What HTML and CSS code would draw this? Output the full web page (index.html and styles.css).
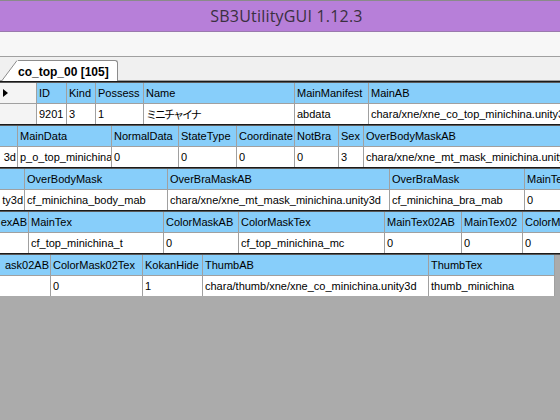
FILE: index.html
```html
<!DOCTYPE html>
<html>
<head>
<meta charset="utf-8">
<link rel="stylesheet" href="styles.css">
</head>
<body>
<div class="window">
  <div class="titlebar">SB3UtilityGUI 1.12.3</div>
  <div class="toolbar"></div>
  <div class="tabstrip">
    <div class="tab">
      <svg class="tab-slant" width="18" height="21" viewBox="0 0 18 21">
        <polygon points="2,21 17,0.5 18,0.5 18,21" fill="#ffffff"/>
        <line x1="2" y1="20.5" x2="17" y2="0.5" stroke="#8c8c8c" stroke-width="1"/>
      </svg>
      <span class="tab-label">co_top_00 [105]</span>
    </div>
  </div>

  <div class="grid g1">
    <div class="c rh"><svg width="6" height="8" viewBox="0 0 6 8"><polygon points="0,0 5,4 0,8" fill="#000"/></svg></div>
    <div class="c h">ID</div>
    <div class="c h">Kind</div>
    <div class="c h">Possess</div>
    <div class="c h">Name</div>
    <div class="c h">MainManifest</div>
    <div class="c h">MainAB</div>
    <div class="c rh"></div>
    <div class="c d">9201</div>
    <div class="c d">3</div>
    <div class="c d">1</div>
    <div class="c d jp">ミニチャイナ</div>
    <div class="c d">abdata</div>
    <div class="c d">chara/xne/xne_co_top_minichina.unity3d</div>
  </div>

  <div class="grid g2">
    <div class="c h"></div>
    <div class="c h">MainData</div>
    <div class="c h">NormalData</div>
    <div class="c h">StateType</div>
    <div class="c h">Coordinate</div>
    <div class="c h">NotBra</div>
    <div class="c h">Sex</div>
    <div class="c h">OverBodyMaskAB</div>
    <div class="c d end"><span>3d</span></div>
    <div class="c d">p_o_top_minichina</div>
    <div class="c d">0</div>
    <div class="c d">0</div>
    <div class="c d">0</div>
    <div class="c d">0</div>
    <div class="c d">3</div>
    <div class="c d">chara/xne/xne_mt_mask_minichina.unity3d</div>
  </div>

  <div class="grid g3">
    <div class="c h"></div>
    <div class="c h">OverBodyMask</div>
    <div class="c h">OverBraMaskAB</div>
    <div class="c h">OverBraMask</div>
    <div class="c h">MainTexAB</div>
    <div class="c d end"><span>ty3d</span></div>
    <div class="c d">cf_minichina_body_mab</div>
    <div class="c d">chara/xne/xne_mt_mask_minichina.unity3d</div>
    <div class="c d">cf_minichina_bra_mab</div>
    <div class="c d">0</div>
  </div>

  <div class="grid g4">
    <div class="c h end"><span>exAB</span></div>
    <div class="c h">MainTex</div>
    <div class="c h">ColorMaskAB</div>
    <div class="c h">ColorMaskTex</div>
    <div class="c h">MainTex02AB</div>
    <div class="c h">MainTex02</div>
    <div class="c h">ColorMask02AB</div>
    <div class="c d"></div>
    <div class="c d">cf_top_minichina_t</div>
    <div class="c d">0</div>
    <div class="c d">cf_top_minichina_mc</div>
    <div class="c d">0</div>
    <div class="c d">0</div>
    <div class="c d">0</div>
  </div>

  <div class="grid g5">
    <div class="c h end"><span>ask02AB</span></div>
    <div class="c h">ColorMask02Tex</div>
    <div class="c h">KokanHide</div>
    <div class="c h">ThumbAB</div>
    <div class="c h">ThumbTex</div>
    <div class="c d"></div>
    <div class="c d">0</div>
    <div class="c d">1</div>
    <div class="c d">chara/thumb/xne/xne_co_minichina.unity3d</div>
    <div class="c d">thumb_minichina</div>
  </div>
</div>
</body>
</html>
```

FILE: styles.css
```css
* { box-sizing: border-box; }
html, body { margin: 0; padding: 0; }
body {
  width: 560px;
  height: 420px;
  overflow: hidden;
  background: #ababab;
  font-family: "Liberation Sans", Arial, sans-serif;
}
.window { width: 560px; }

.titlebar {
  height: 32px;
  background: #b77fd9;
  border-top: 1px solid #8a8a8a;
  border-bottom: 1px solid #9a7aad;
  display: flex;
  align-items: center;
  justify-content: center;
  padding-left: 13px;
  font-family: "Open Sans", "Noto Sans", sans-serif;
  font-size: 16px;
  letter-spacing: 0.2px;
  color: #3a3040;
}

.toolbar {
  height: 25px;
  background: #f7f7f7;
  border-bottom: 1px solid #a0a0a0;
}

.tabstrip {
  height: 24px;
  background: #f0f0f0;
  border-bottom: 1px solid #a0a0a0;
  display: flex;
  align-items: flex-end;
}
.tab {
  display: flex;
  align-items: stretch;
  height: 21px;
  margin-bottom: -1px;
}
.tab-slant { display: block; }
.tab-label {
  background: #ffffff;
  border-top: 1px solid #8c8c8c;
  border-right: 1px solid #8c8c8c;
  border-top-right-radius: 3px;
  padding: 1px 8px 0 0;
  font-size: 12px;
  font-weight: bold;
  color: #000;
  display: flex;
  align-items: center;
}

.grid {
  display: grid;
  grid-template-rows: 21px 20px;
  border-top: 1px solid #1a1a1a;
  box-shadow: inset 0 1px 0 #5a5a5a;
  padding-top: 1px;
  overflow: hidden;
  width: 560px;
  font-size: 11px;
  color: #000;
}
.g1 { grid-template-columns: 37px 30px 29px 48px 151px 74px 260px; }
.g2 { grid-template-columns: 18px 94px 67px 58px 58px 44px 25px 250px; }
.g3 { grid-template-columns: 25px 143px 222px 135px 100px; }
.g4 { grid-template-columns: 29px 135px 75px 146px 77px 61px 100px; }
.g5 { grid-template-columns: 51px 92px 60px 226px 126px; }

.c {
  border-right: 1px solid #a0a0a0;
  white-space: nowrap;
  overflow: hidden;
  display: flex;
  align-items: center;
  padding-left: 2px;
}
.h {
  background: #87cefa;
  border-bottom: 1px solid #a0a0a0;
}
.d { background: #ffffff; }
.rh {
  background: #f4f4f4;
  padding-left: 3px;
}
.g1 .rh:first-child { border-bottom: 1px solid #a0a0a0; }
.end {
  justify-content: flex-end;
  padding-left: 0;
  padding-right: 1px;
}
.end span { flex: none; }
.jp {
  font-family: "Noto Sans CJK JP", sans-serif;
  font-size: 11px;
  letter-spacing: -2px;
}
```
